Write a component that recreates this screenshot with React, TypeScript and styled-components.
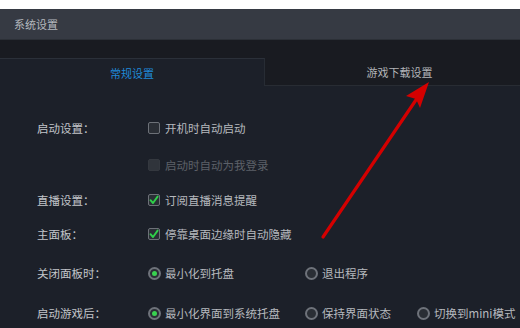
import styled, { createGlobalStyle } from "styled-components";

const GlobalStyle = createGlobalStyle`
	html, body {
		margin: 0;
		padding: 0;
		background: #ffffff;
	}
	body {
		font-family: "Noto Sans CJK SC", "Noto Sans", sans-serif;
	}
`;

type Option = { text: string; kind: "check" | "radio"; on?: boolean; disabled?: boolean };
type Row = { label?: string; gap: number; options: Option[] };

const rows: Row[] = [
	{ label: "启动设置：", gap: 32, options: [{ text: "开机时自动启动", kind: "check" }] },
	{ gap: 17, options: [{ text: "启动时自动为我登录", kind: "check", disabled: true }] },
	{ label: "直播设置：", gap: 15, options: [{ text: "订阅直播消息提醒", kind: "check", on: true }] },
	{ label: "主面板：", gap: 14, options: [{ text: "停靠桌面边缘时自动隐藏", kind: "check", on: true }] },
	{
		label: "关闭面板时：",
		gap: 19,
		options: [
			{ text: "最小化到托盘", kind: "radio", on: true },
			{ text: "退出程序", kind: "radio" },
		],
	},
	{
		label: "启动游戏后：",
		gap: 20,
		options: [
			{ text: "最小化界面到系统托盘", kind: "radio", on: true },
			{ text: "保持界面状态", kind: "radio" },
			{ text: "切换到mini模式", kind: "radio" },
		],
	},
];

export default function App() {
	return (
		<>
			<GlobalStyle />
			<Page>
				<Window>
					<TitleBar>系统设置</TitleBar>
					<TabBar>
						<Tab $active>常规设置</Tab>
						<Tab>游戏下载设置</Tab>
					</TabBar>
					<Content>
						{rows.map((row, i) => (
							<SettingRow key={i} $gap={row.gap}>
								<Label>{row.label}</Label>
								<Options>
									{row.options.map((opt) => (
										<OptionItem key={opt.text} $disabled={opt.disabled}>
											{opt.kind === "check" ? (
												<CheckBox $disabled={opt.disabled}>
													{opt.on && (
														<svg width="10" height="10" viewBox="0 0 10 10">
															<path d="M1.5 5.2 L4 8 L8.6 1.6" fill="none" stroke="#2fd04a" strokeWidth="1.9" strokeLinecap="round" strokeLinejoin="round" />
														</svg>
													)}
												</CheckBox>
											) : (
												<Radio $on={opt.on} />
											)}
											{opt.text}
										</OptionItem>
									))}
								</Options>
							</SettingRow>
						))}
					</Content>
					<Arrow width="520" height="328" viewBox="0 0 520 328">
						<line x1="323" y1="237" x2="420" y2="94" stroke="#d40000" strokeWidth="3.2" strokeLinecap="round" />
						<path d="M429 82 L406 96 L416 99 L420 108 Z" fill="#d40000" />
					</Arrow>
				</Window>
			</Page>
		</>
	);
}

const Page = styled.div`
	width: 520px;
	height: 328px;
	padding-top: 9px;
	box-sizing: border-box;
	background: #ffffff;
	overflow: hidden;
`;

const Window = styled.div`
	position: relative;
	height: 319px;
	background: #1c2029;
	display: flex;
	flex-direction: column;
`;

const TitleBar = styled.div`
	height: 30px;
	line-height: 30px;
	padding-left: 14px;
	background: #363a43;
	border-bottom: 1px solid #2c3037;
	color: #b4b8be;
	font-size: 11px;
`;

const TabBar = styled.div`
	display: flex;
	height: 46px;
	background: #191b21;
`;

const Tab = styled.div<{ $active?: boolean }>`
	display: flex;
	align-items: center;
	justify-content: center;
	font-size: 11px;
	box-sizing: border-box;
	${(p) =>
		p.$active
			? `
		width: 265px;
		margin-top: 18px;
		height: 28px;
		background: #1c2029;
		border-top: 1px solid #2b3039;
		border-right: 1px solid #272c34;
		color: #1f8ad9;
	`
			: `
		flex: 1;
		padding-top: 18px;
		padding-left: 14px;
		border-bottom: 1px solid #282c33;
		color: #b2b4b8;
	`}
`;

const Content = styled.div`
	flex: 1;
`;

const SettingRow = styled.div<{ $gap: number }>`
	display: grid;
	grid-template-columns: 111px 1fr;
	align-items: center;
	height: 20px;
	margin-top: ${(p) => p.$gap}px;
	padding-left: 37px;
`;

const Label = styled.div`
	color: #c2c5ca;
	font-size: 11.5px;
`;

const Options = styled.div`
	display: grid;
	grid-template-columns: 157px 112px auto;
	align-items: center;
`;

const OptionItem = styled.div<{ $disabled?: boolean }>`
	display: flex;
	align-items: center;
	gap: 4px;
	white-space: nowrap;
	font-size: 11.5px;
	color: ${(p) => (p.$disabled ? "#5c6068" : "#b6b9be")};
`;

const CheckBox = styled.span<{ $disabled?: boolean }>`
	display: inline-flex;
	align-items: center;
	justify-content: center;
	width: 12px;
	height: 12px;
	box-sizing: border-box;
	border-radius: 2px;
	border: 1px solid ${(p) => (p.$disabled ? "#34383f" : "#6d7178")};
	background: ${(p) => (p.$disabled ? "#30343b" : "#2a2e35")};
	margin-right: 1px;
`;

const Radio = styled.span<{ $on?: boolean }>`
	display: inline-flex;
	align-items: center;
	justify-content: center;
	width: 13px;
	height: 13px;
	box-sizing: border-box;
	border-radius: 50%;
	border: 2px solid #6e727a;
	background: #2a2e35;
	&::after {
		content: "";
		width: 5px;
		height: 5px;
		border-radius: 50%;
		background: ${(p) => (p.$on ? "#39d150" : "transparent")};
	}
`;

const Arrow = styled.svg`
	position: absolute;
	left: 0;
	top: -9px;
	pointer-events: none;
`;
